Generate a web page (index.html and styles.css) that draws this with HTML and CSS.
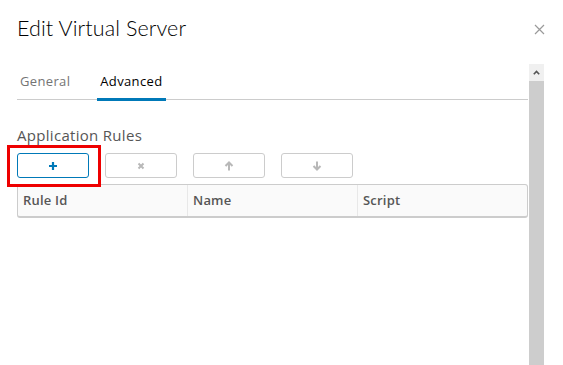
FILE: index.html
```html
<!DOCTYPE html>
<html lang="en">
<head>
  <meta charset="UTF-8">
  <meta name="viewport" content="width=device-width, initial-scale=1.0">
  <title>Edit Virtual Server</title>
  <link rel="stylesheet" href="styles.css">
</head>
<body>
  <div class="modal">
    <div class="modal-header">
      <h3 class="modal-title">Edit Virtual Server</h3>
      <button class="close" aria-label="Close">
        <svg width="11" height="11" viewBox="0 0 11 11"><path d="M1 1 L10 10 M10 1 L1 10" stroke="#9a9a9a" stroke-width="1.2" fill="none"/></svg>
      </button>
    </div>
    <div class="modal-body">
      <div class="content">
        <ul class="tabs">
          <li class="tab">General</li>
          <li class="tab active">Advanced</li>
        </ul>
        <h4 class="section-title">Application Rules</h4>
        <div class="toolbar">
          <div class="highlight">
            <button class="btn btn-primary">
              <svg width="10" height="10" viewBox="0 0 10 10"><path d="M5 1 V9 M1 5 H9" stroke="#0079b8" stroke-width="2.2" fill="none"/></svg>
            </button>
          </div>
          <button class="btn">
            <svg width="8" height="8" viewBox="0 0 8 8"><path d="M1.5 1.5 L6.5 6.5 M6.5 1.5 L1.5 6.5" stroke="#b8b8b8" stroke-width="2" fill="none"/></svg>
          </button>
          <button class="btn">
            <svg width="10" height="10" viewBox="0 0 10 10"><path d="M5 9.5 V2 M1.5 5 L5 1.5 L8.5 5" stroke="#b8b8b8" stroke-width="2" fill="none"/></svg>
          </button>
          <button class="btn">
            <svg width="10" height="10" viewBox="0 0 10 10"><path d="M5 0.5 V8 M1.5 5 L5 8.5 L8.5 5" stroke="#b8b8b8" stroke-width="2" fill="none"/></svg>
          </button>
        </div>
        <div class="grid">
          <div class="grid-head">
            <div class="col col-id">Rule Id</div>
            <div class="col col-name">Name</div>
            <div class="col col-script">Script</div>
          </div>
        </div>
      </div>
      <div class="scrollbar">
        <div class="scroll-up">
          <svg width="7" height="5" viewBox="0 0 7 5"><path d="M0.8 4.2 L3.5 1.4 L6.2 4.2" stroke="#555" stroke-width="1.6" fill="none"/></svg>
        </div>
        <div class="scroll-track"></div>
      </div>
    </div>
  </div>
</body>
</html>
```

FILE: styles.css
```css
body { margin: 0; background: #fff; font-family: "Open Sans", Lato, sans-serif; color: #565656; overflow: hidden; }
.modal { width: 563px; height: 365px; display: flex; flex-direction: column; }
.modal-header { display: flex; justify-content: space-between; align-items: flex-start; padding: 14px 18px 0 17px; height: 52px; box-sizing: border-box; }
.modal-title { margin: 0; font-family: Lato, sans-serif; font-size: 21.5px; font-weight: 300; color: #000; line-height: 28px; letter-spacing: 0.1px; }
.close { border: 0; background: none; padding: 0; margin-top: 10px; width: 11px; height: 11px; display: block; }
.close svg { display: block; }
.modal-body { flex: 1; display: flex; padding-top: 12px; }
.content { width: 511px; padding-left: 17px; }
.tabs { list-style: none; margin: 0; padding: 0; display: flex; border-bottom: 1px solid #ccc; height: 36px; box-sizing: border-box; }
.tab { font-size: 13px; line-height: 34px; color: #747474; padding: 0 3px; margin-right: 26px; letter-spacing: 0.35px; }
.tab.active { color: #000; border-bottom: 3px solid #0079b8; margin-bottom: -2px; line-height: 34px; box-sizing: border-box; height: 37px; width: 69px; padding-left: 3px; margin-left: -2px; }
.section-title { margin: 26px 0 0; font-size: 15px; font-weight: 400; color: #565656; line-height: 18px; letter-spacing: 0.3px; }
.toolbar { display: flex; gap: 16px; margin-top: 9px; height: 31px; align-items: flex-start; }
.highlight { position: relative; }
.highlight::after { content: ""; position: absolute; left: -10px; top: -8px; width: 88px; height: 36px; border: 3px solid #e00; }
.btn { width: 72px; height: 25px; border: 1px solid #ccc; border-radius: 3px; background: #fff; padding: 0; display: flex; align-items: center; justify-content: center; }
.btn-primary { border-color: #0079b8; }
.grid { border: 1px solid #ccc; border-bottom-width: 2px; border-radius: 3px; background: #fafafa; }
.grid-head { display: flex; height: 31px; }
.col { font-size: 13px; font-weight: 600; color: #565656; line-height: 31px; padding-left: 5px; box-sizing: border-box; letter-spacing: 0.2px; }
.col-id { width: 170px; border-right: 1px solid #e8e8e8; }
.col-name { width: 170px; border-right: 1px solid #e8e8e8; }
.col-script { flex: 1; }
.scrollbar { width: 15px; display: flex; flex-direction: column; margin-left: 1px; }
.scroll-up { height: 17px; background: #f0f0f0; display: flex; align-items: center; justify-content: center; }
.scroll-track { flex: 1; background: #cdcdcd; }
```
